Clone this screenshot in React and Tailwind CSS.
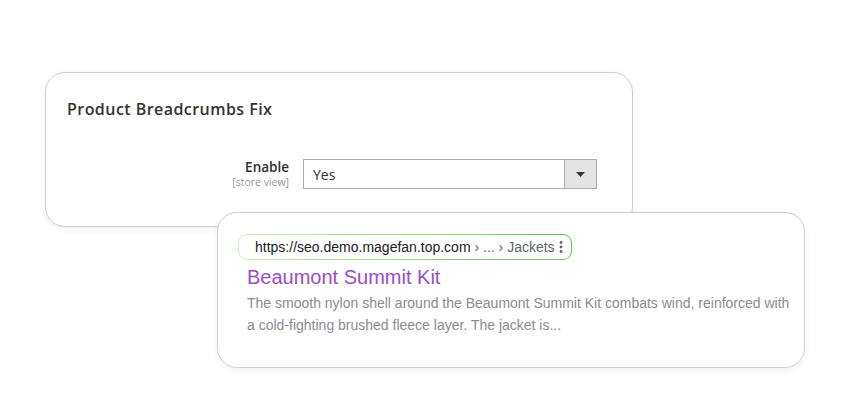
export default function App() {
  return (
    <div className="w-[850px] h-[420px] bg-white overflow-hidden" style={{ fontFamily: '"Open Sans", sans-serif' }}>
      <div className="flex flex-col pt-[72px] pl-[45px]">
        <div className="w-[588px] h-[155px] bg-white border border-[#cfcfcf] rounded-[20px] shadow-[0_2px_8px_rgba(0,0,0,0.06)] flex flex-col">
          <div className="pl-[21px] pt-[26px] text-[16px] leading-[20px] font-semibold text-[#333333] tracking-[0.45px]">
            Product Breadcrumbs Fix
          </div>
          <div className="flex mt-[40px]">
            <div className="w-[243px] flex flex-col items-end">
              <div className="text-[13.5px] leading-[16px] font-semibold text-[#303030]">Enable</div>
              <div className="text-[10.5px] leading-[13px] text-[#999999] mt-[1px]">[store view]</div>
            </div>
            <div className="ml-[14px] w-[294px] h-[30px] border border-[#adadad] flex bg-white">
              <div className="flex-1 flex items-center pl-[9px] text-[14px] text-[#303030]">Yes</div>
              <div className="w-[32px] bg-[#e3e3e3] border-l border-[#adadad] flex items-center justify-center">
                <svg width="9" height="5" viewBox="0 0 9 5"><path d="M0 0h9L4.5 5z" fill="#333" /></svg>
              </div>
            </div>
          </div>
        </div>
        <div className="ml-[172px] mt-[-15px] w-[588px] h-[156px] bg-white border border-[#cfcfcf] rounded-[20px] shadow-[0_2px_8px_rgba(0,0,0,0.06)] flex flex-col pl-[20px] pt-[21px]" style={{ fontFamily: '"Liberation Sans", Arial, sans-serif' }}>
          <div className="w-[334px] h-[26px] rounded-[9px] p-[1px] bg-gradient-to-r from-[#cdeeb8] to-[#67c14a]">
            <div className="w-full h-full rounded-[8px] bg-white flex items-center pl-[16px] text-[14px]">
              <span className="text-[#202124]">https://seo.demo.magefan.top.com</span>
              <span className="text-[#5f6368]">&nbsp;› ... › Jackets</span>
              <svg className="ml-[4px]" width="4" height="14" viewBox="0 0 4 14"><circle cx="2" cy="2.5" r="1.4" fill="#5f6368" /><circle cx="2" cy="7" r="1.4" fill="#5f6368" /><circle cx="2" cy="11.5" r="1.4" fill="#5f6368" /></svg>
            </div>
          </div>
          <div className="pl-[9px] mt-[4px] text-[20px] leading-[26px] text-[#9a4dc6]">Beaumont Summit Kit</div>
          <div className="pl-[9px] mt-[2px] text-[14px] leading-[22px] text-[#8a8c90] w-[560px]">
            The smooth nylon shell around the Beaumont Summit Kit combats wind, reinforced with a cold-fighting brushed fleece layer. The jacket is...
          </div>
        </div>
      </div>
    </div>
  );
}
